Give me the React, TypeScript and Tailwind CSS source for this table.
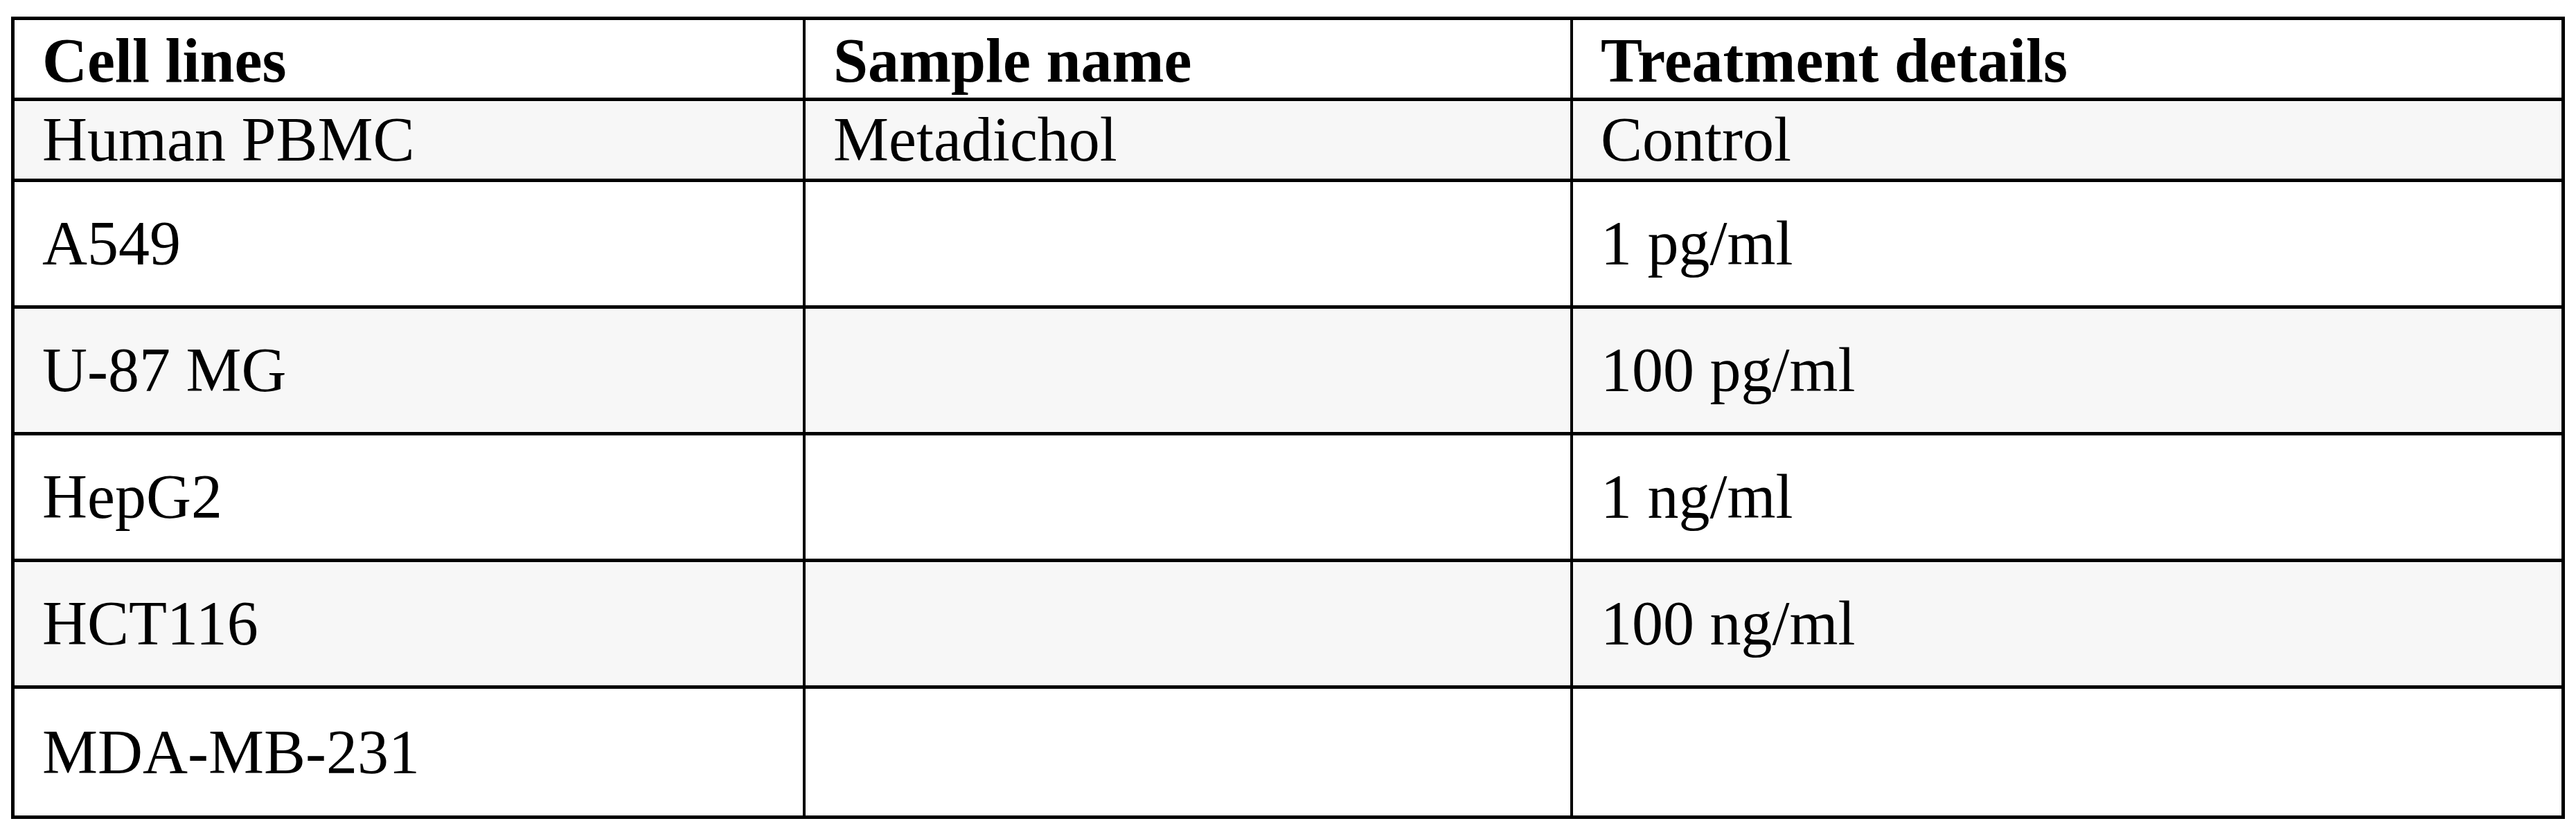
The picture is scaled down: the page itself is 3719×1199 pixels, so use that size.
const rows = [
  { cell: "Human PBMC", sample: "Metadichol", treatment: "Control", shaded: true, tall: false },
  { cell: "A549", sample: "", treatment: "1 pg/ml", shaded: false, tall: true },
  { cell: "U-87 MG", sample: "", treatment: "100 pg/ml", shaded: true, tall: true },
  { cell: "HepG2", sample: "", treatment: "1 ng/ml", shaded: false, tall: true },
  { cell: "HCT116", sample: "", treatment: "100 ng/ml", shaded: true, tall: true },
  { cell: "MDA-MB-231", sample: "", treatment: "", shaded: false, tall: true },
];

export default function App() {
  return (
    <div className="min-h-screen bg-white pl-[16px] pt-[24px] font-['Liberation_Serif',serif] text-[90px] leading-none text-black">
      <div className="w-[3687px] border-[5px] border-black">
        <div className="grid h-[117px] grid-cols-[1138px_1108px_1431px] border-b-[5px] border-black font-bold">
          <div className="flex items-center pl-[40px] pt-[6px]">Cell lines</div>
          <div className="flex items-center border-l-[4px] border-black pl-[40px] pt-[6px]">Sample name</div>
          <div className="flex items-center border-l-[4px] border-black pl-[40px] pt-[6px]">Treatment details</div>
        </div>

        {rows.map((row, i) => (
          <div
            key={row.cell}
            className={`grid grid-cols-[1138px_1108px_1431px] border-black ${
              i < rows.length - 1 ? "border-b-[5px]" : ""
            } ${row.tall ? "h-[183px]" : "h-[117px]"} ${row.shaded ? "bg-[#f7f7f7]" : "bg-white"}`}
          >
            <div className="flex items-center pl-[40px]">{row.cell}</div>
            <div className="flex items-center border-l-[4px] border-black pl-[40px]">{row.sample}</div>
            <div className="flex items-center border-l-[4px] border-black pl-[40px]">{row.treatment}</div>
          </div>
        ))}
      </div>
    </div>
  );
}
